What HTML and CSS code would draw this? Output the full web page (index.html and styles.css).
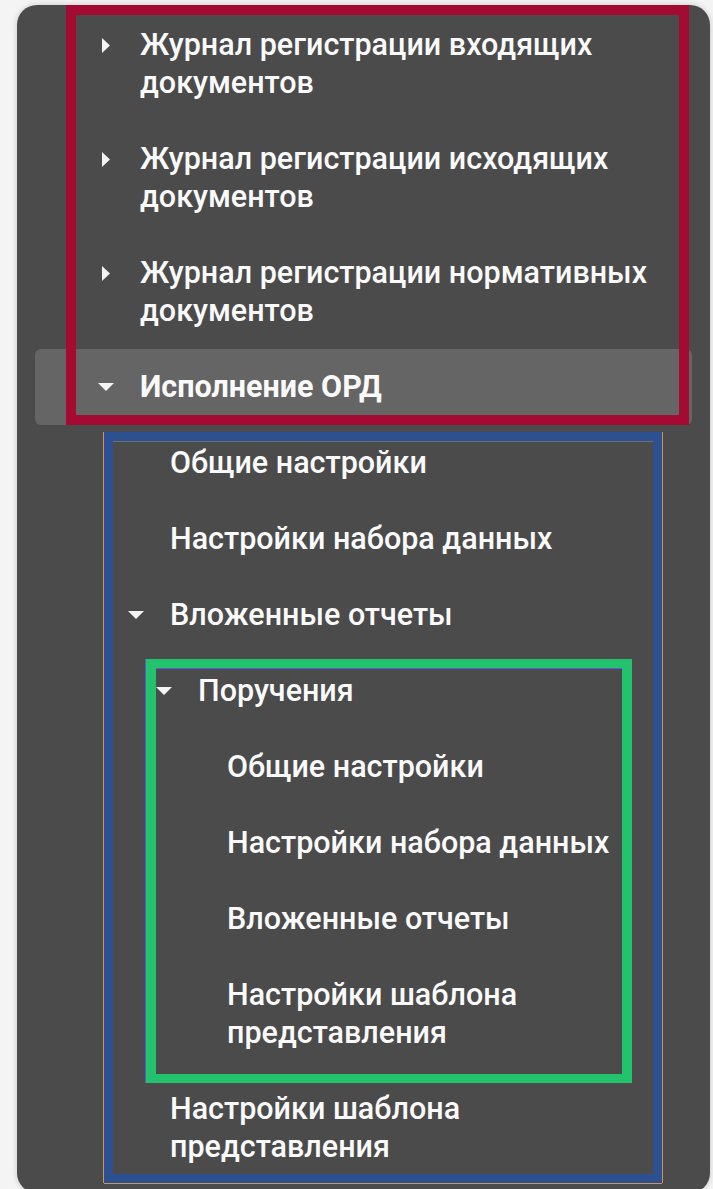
FILE: index.html
```html
<!DOCTYPE html>
<html lang="ru">
<head>
<meta charset="utf-8">
<title>Отчеты</title>
<link rel="stylesheet" href="styles.css">
</head>
<body>
<nav class="panel">
  <div class="tree">
    <div class="group frame-red">
      <div class="row lvl-0">
        <span class="caret"><svg width="8" height="15" viewBox="0 0 8 15"><polygon points="0,0 8,7.5 0,15"/></svg></span>
        <span class="label">Журнал регистрации входящих документов</span>
      </div>
      <div class="row lvl-0">
        <span class="caret"><svg width="8" height="15" viewBox="0 0 8 15"><polygon points="0,0 8,7.5 0,15"/></svg></span>
        <span class="label">Журнал регистрации исходящих документов</span>
      </div>
      <div class="row lvl-0">
        <span class="caret"><svg width="8" height="15" viewBox="0 0 8 15"><polygon points="0,0 8,7.5 0,15"/></svg></span>
        <span class="label">Журнал регистрации нормативных документов</span>
      </div>
      <div class="row lvl-0 is-active">
        <span class="caret"><svg width="16" height="8" viewBox="0 0 16 8"><polygon points="0,0 16,0 8,8"/></svg></span>
        <span class="label">Исполнение ОРД</span>
      </div>
    </div>

    <div class="group frame-blue">
      <div class="row lvl-1">
        <span class="caret"></span>
        <span class="label">Общие настройки</span>
      </div>
      <div class="row lvl-1">
        <span class="caret"></span>
        <span class="label">Настройки набора данных</span>
      </div>
      <div class="row lvl-1">
        <span class="caret"><svg width="16" height="8" viewBox="0 0 16 8"><polygon points="0,0 16,0 8,8"/></svg></span>
        <span class="label">Вложенные отчеты</span>
      </div>

      <div class="group frame-green">
        <div class="row lvl-2">
          <span class="caret"><svg width="16" height="8" viewBox="0 0 16 8"><polygon points="0,0 16,0 8,8"/></svg></span>
          <span class="label">Поручения</span>
        </div>
        <div class="row lvl-3">
          <span class="caret"></span>
          <span class="label">Общие настройки</span>
        </div>
        <div class="row lvl-3">
          <span class="caret"></span>
          <span class="label">Настройки набора данных</span>
        </div>
        <div class="row lvl-3">
          <span class="caret"></span>
          <span class="label">Вложенные отчеты</span>
        </div>
        <div class="row lvl-3">
          <span class="caret"></span>
          <span class="label">Настройки шаблона представления</span>
        </div>
      </div>

      <div class="row lvl-1">
        <span class="caret"></span>
        <span class="label">Настройки шаблона представления</span>
      </div>
    </div>
  </div>
</nav>
</body>
</html>
```

FILE: styles.css
```css
html, body {
  margin: 0;
  padding: 0;
  background: #f4f4f4;
  overflow: hidden;
}

body {
  font-family: Roboto, "Noto Sans", "Liberation Sans", sans-serif;
}

/* dark side panel */
.panel {
  box-sizing: border-box;
  margin: 5px 3px 0 17px;
  height: 1188px;
  padding: 2px 18px 0 18px;
  background: #4b4b4b;
  border-radius: 20px;
  box-shadow: 0 0 6px rgba(0, 0, 0, 0.18);
}

.tree {
  display: flex;
  flex-direction: column;
}

.group {
  position: relative;
  display: flex;
  flex-direction: column;
}

/* tree rows */
.row {
  display: flex;
  align-items: flex-start;
  padding: 19px 20px 19px 0;
  color: #fafafa;
  font-size: 30.5px;
  font-weight: 500;
  line-height: 38px;
  border-radius: 6px;
}

.row.is-active {
  background: #656565;
  font-weight: 700;
}

.lvl-0 { padding-left: 60px; }
.lvl-1 { padding-left: 90px; }
.lvl-2 { padding-left: 118px; }
.lvl-3 { padding-left: 147px; }

.caret {
  flex: 0 0 22px;
  height: 38px;
  margin-right: 23px;
  display: flex;
  align-items: center;
  justify-content: center;
}

.caret svg {
  display: block;
  fill: #f4f4f4;
}

.label {
  flex: 1 1 auto;
}

/* highlight frames drawn over the tree sections */
.frame-red::after,
.frame-blue::after,
.frame-green::after {
  content: "";
  position: absolute;
  box-sizing: border-box;
  pointer-events: none;
}

.frame-red::after {
  top: -2px;
  left: 31px;
  right: 3px;
  bottom: 0;
  border: 10px solid #a30b32;
}

.frame-blue::after {
  top: 7px;
  left: 69px;
  right: 30px;
  bottom: 2px;
  border: 9px solid #2d5190;
  box-shadow: -1px 0 0 #c8955a, 1px 0 0 #c8955a, 0 1px 0 #c8955a, inset 0 1px 0 #6e6e6e;
}

.frame-green::after {
  top: 6px;
  left: 111px;
  right: 60px;
  bottom: -12px;
  border-style: solid;
  border-color: #22c36c;
  border-width: 9px 10px;
  box-shadow: -1px 0 0 #5b5bd6, inset 0 1px 0 #5b5bd6;
}
```
